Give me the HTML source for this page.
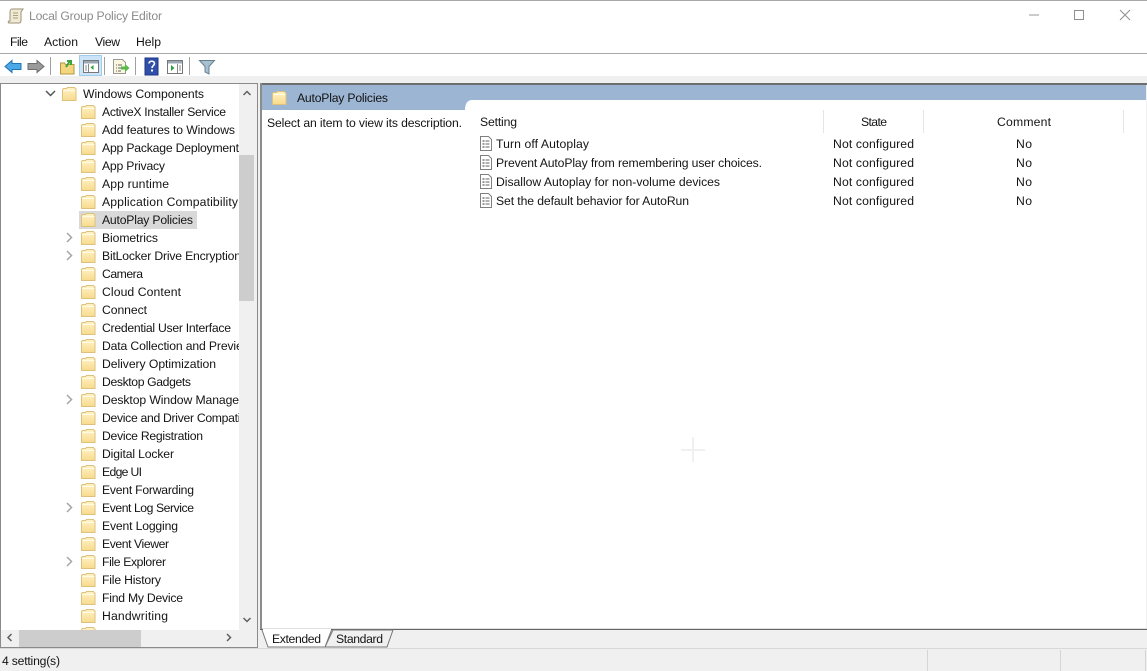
<!DOCTYPE html>
<html lang="en"><head><meta charset="utf-8"><title>Local Group Policy Editor</title>
<style>html,body{margin:0;padding:0;background:#fff;overflow:hidden}svg{display:block}text{font-family:"Liberation Sans",sans-serif;font-size:12.2px;fill:#141414}</style></head><body>
<svg xmlns="http://www.w3.org/2000/svg" width="1147" height="671" viewBox="0 0 1147 671">
<defs>
<linearGradient id="fg" x1="0" y1="0" x2="0" y2="1"><stop offset="0" stop-color="#fff4c9"/><stop offset="1" stop-color="#f8da8c"/></linearGradient>
<g id="f"><path d="M.5 3V2.500l1-1h3l1-1h7l1 1.500h.5V13.500H.5z" fill="url(#fg)" stroke="#dcc27c"/><path d="M1.500 3.500h12" stroke="#fffbe8"/></g>
<g id="c"><path d="M0 0l4.500 4.500L0 9" fill="none" stroke="#a6a6a6" stroke-width="1.500"/></g>
<g id="p"><path d="M.5.5h8l3 3v11H.5z" fill="#fff" stroke="#7f7f7f"/><path d="M2.500 5h2M2.500 8h2M2.500 11h2" stroke="#333"/><path d="M5.500 5h4M5.500 8h4M5.500 11h4" stroke="#666"/></g>
<clipPath id="t"><rect x="1" y="84" width="238" height="546"/></clipPath>
</defs>
<rect width="1147" height="671" fill="#fff"/>
<rect width="1147" height="1" fill="#a8a8a8"/>
<!-- title -->
<path d="M12 9h11l-2 3v9c0 1-1 2-2 2H9c-1 0-1-2 0-2h1V12c0-2 1-3 2-3z" fill="#f1ead2" stroke="#9a9278"/><path d="M13 13h5M13 15.500h5M13 18h5" stroke="#a8a08a"/>
<text x="29" y="20" textLength="133" style="fill:#8b8b8b">Local Group Policy Editor</text>
<path d="M1029 15h10" stroke="#9a9a9a"/><rect x="1074.500" y="10.500" width="9" height="9" fill="none" stroke="#8f8f8f"/><path d="M1120 10l10 10M1130 10l-10 10" stroke="#8f8f8f"/>
<!-- menu -->
<text x="10" y="46" textLength="18">File</text><text x="44" y="46" textLength="34">Action</text><text x="95" y="46" textLength="25">View</text><text x="136" y="46" textLength="25">Help</text>
<rect y="53" width="1147" height="1" fill="#a9a9a9"/>
<!-- toolbar -->
<rect y="76" width="1147" height="8" fill="#f0f0f0"/>
<path d="M5 66.500l7-6v3h9v6h-9v3z" fill="#4da8e6" stroke="#1f75b8"/>
<path d="M44 66.500l-7-6v3h-9v6h9v3z" fill="#9a9a9a" stroke="#6e6e6e"/>
<rect x="50" y="57" width="1" height="18" fill="#a0a0a0"/>
<path d="M60.500 63h4l1 1.500h8.500v9.500h-13.500z" fill="#f4d681" stroke="#b8963f"/><path d="M66 67l4-6m-3 0h4v4" fill="none" stroke="#3da53d" stroke-width="2"/>
<rect x="79.500" y="55.500" width="22" height="20" fill="#cce4f7" stroke="#9fcdec"/>
<rect x="83.500" y="60.500" width="15" height="12" fill="#fff" stroke="#777"/><rect x="84" y="61" width="14" height="2.500" fill="#9aa7b5"/><path d="M88.500 64v8" stroke="#888"/><path d="M85 66h2M85 68h2M85 70h2" stroke="#888"/><path d="M93.500 65v5l-3-2.500z" fill="#2e9e3c"/>
<rect x="104" y="57" width="1" height="18" fill="#a0a0a0"/>
<path d="M113.500 59.500h9l3 3v11h-12z" fill="#fbf7de" stroke="#999"/><path d="M116 65h1M116 68h1M116 71h1M118 65h4M118 68h3M118 71h3" stroke="#666"/><path d="M121 66.500h4v-2.500l4.500 4-4.500 4v-2.500h-4z" fill="#58b848"/>
<rect x="135" y="57" width="1" height="18" fill="#a0a0a0"/>
<rect x="145" y="58" width="13" height="17" fill="#2f4fa8" stroke="#1d3683"/>
<path d="M149 63.500c0-3 5.500-3 5.500 0 0 2-2.500 2-2.500 4.500" fill="none" stroke="#fff" stroke-width="1.600"/><rect x="151" y="69.500" width="2" height="2" fill="#fff"/>
<rect x="167.500" y="60.500" width="15" height="13" fill="#fff" stroke="#777"/><rect x="168" y="61" width="14" height="2.500" fill="#9aa7b5"/><path d="M177.500 64v9" stroke="#888"/><path d="M179 66h2M179 68h2M179 70h2" stroke="#888"/><path d="M171 65v6l3.500-3z" fill="#2e9e3c"/>
<rect x="189" y="57" width="1" height="18" fill="#a0a0a0"/>
<path d="M199.500 60.500h15l-5.500 6v7.500l-4-2v-5.500z" fill="#a8c0cf" stroke="#66808f"/>
<!-- left pane -->
<rect x="0" y="83" width="258" height="565" fill="#f0f0f0"/>
<rect x="0.500" y="83.500" width="257" height="564" fill="none" stroke="#8a8a8a"/>
<rect x="1" y="84" width="238" height="546" fill="#fff"/>
<rect x="239" y="84" width="16" height="546" fill="#f0f0f0"/>
<rect x="239" y="155" width="15" height="146" fill="#cdcdcd"/>
<path d="M243.500 96l3.500-3.500 3.500 3.500" transform="translate(0,-1)" fill="none" stroke="#606060" stroke-width="1.500"/>
<path d="M243.500 618l3.500 3.500 3.500-3.500" fill="none" stroke="#606060" stroke-width="1.500"/>
<rect x="19" y="630" width="122" height="17" fill="#cdcdcd"/>
<path d="M11.500 634l-3.500 3.500 3.500 3.500" fill="none" stroke="#606060" stroke-width="1.500"/>
<path d="M227 634l3.500 3.500-3.500 3.500" fill="none" stroke="#606060" stroke-width="1.500"/>
<g clip-path="url(#t)">
<rect x="79" y="211" width="118" height="18" fill="#d9d9d9"/>
<path d="M46 91l4.500 4.500L55 91" fill="none" stroke="#555" stroke-width="1.500"/>
<use href="#f" x="62" y="87"/>
<text x="83" y="98" textLength="121">Windows Components</text>
<use href="#f" x="81" y="105"/><text x="102" y="116" textLength="124">ActiveX Installer Service</text>
<use href="#f" x="81" y="123"/><text x="102" y="134" textLength="133">Add features to Windows</text>
<use href="#f" x="81" y="141"/><text x="102" y="152" textLength="137">App Package Deployment</text>
<use href="#f" x="81" y="159"/><text x="102" y="170" textLength="63">App Privacy</text>
<use href="#f" x="81" y="177"/><text x="102" y="188" textLength="67">App runtime</text>
<use href="#f" x="81" y="195"/><text x="102" y="206" textLength="136">Application Compatibility</text>
<use href="#f" x="81" y="213"/><text x="102" y="224" textLength="91">AutoPlay Policies</text>
<use href="#c" x="67" y="233"/><use href="#f" x="81" y="231"/><text x="102" y="242" textLength="56">Biometrics</text>
<use href="#c" x="67" y="251"/><use href="#f" x="81" y="249"/><text x="102" y="260" textLength="139">BitLocker Drive Encryption</text>
<use href="#f" x="81" y="267"/><text x="102" y="278" textLength="41">Camera</text>
<use href="#f" x="81" y="285"/><text x="102" y="296" textLength="79">Cloud Content</text>
<use href="#f" x="81" y="303"/><text x="102" y="314" textLength="45">Connect</text>
<use href="#f" x="81" y="321"/><text x="102" y="332" textLength="129">Credential User Interface</text>
<use href="#f" x="81" y="339"/><text x="102" y="350" textLength="185">Data Collection and Preview Builds</text>
<use href="#f" x="81" y="357"/><text x="102" y="368" textLength="114">Delivery Optimization</text>
<use href="#f" x="81" y="375"/><text x="102" y="386" textLength="89">Desktop Gadgets</text>
<use href="#c" x="67" y="395"/><use href="#f" x="81" y="393"/><text x="102" y="404" textLength="141">Desktop Window Manager</text>
<use href="#f" x="81" y="411"/><text x="102" y="422" textLength="161">Device and Driver Compatibility</text>
<use href="#f" x="81" y="429"/><text x="102" y="440" textLength="101">Device Registration</text>
<use href="#f" x="81" y="447"/><text x="102" y="458" textLength="72">Digital Locker</text>
<use href="#f" x="81" y="465"/><text x="102" y="476" textLength="40">Edge UI</text>
<use href="#f" x="81" y="483"/><text x="102" y="494" textLength="92">Event Forwarding</text>
<use href="#c" x="67" y="503"/><use href="#f" x="81" y="501"/><text x="102" y="512" textLength="92">Event Log Service</text>
<use href="#f" x="81" y="519"/><text x="102" y="530" textLength="76">Event Logging</text>
<use href="#f" x="81" y="537"/><text x="102" y="548" textLength="67">Event Viewer</text>
<use href="#c" x="67" y="557"/><use href="#f" x="81" y="555"/><text x="102" y="566" textLength="64">File Explorer</text>
<use href="#f" x="81" y="573"/><text x="102" y="584" textLength="59">File History</text>
<use href="#f" x="81" y="591"/><text x="102" y="602" textLength="81">Find My Device</text>
<use href="#f" x="81" y="609"/><text x="102" y="620" textLength="66">Handwriting</text>
<use href="#f" x="81" y="627"/>
</g>
<!-- right pane -->
<rect x="258" y="84" width="889" height="564" fill="#f0f0f0"/>
<rect x="260" y="83" width="887" height="2" fill="#6e6e6e"/>
<rect x="260" y="83" width="2" height="546" fill="#8c8c8c"/>
<rect x="262" y="85" width="884" height="543" fill="#fff"/>
<path d="M262 85h884v15H472c-4 0-7 3-7 10H262z" fill="#9bb5d3"/>
<use href="#f" x="272" y="91"/>
<text x="297" y="102" textLength="91">AutoPlay Policies</text>
<text x="267" y="127" textLength="195">Select an item to view its description.</text>
<text x="480" y="126" textLength="37">Setting</text><text x="861" y="126" textLength="26">State</text><text x="997" y="126" textLength="54">Comment</text>
<path d="M823.500 110v23M923.500 110v23M1123.500 110v23" stroke="#e5e5e5"/>
<use href="#p" x="480" y="136"/><text x="496" y="148" textLength="93">Turn off Autoplay</text><text x="833" y="148" textLength="81">Not configured</text><text x="1016" y="148" textLength="16">No</text>
<use href="#p" x="480" y="155"/><text x="496" y="167" textLength="266">Prevent AutoPlay from remembering user choices.</text><text x="833" y="167" textLength="81">Not configured</text><text x="1016" y="167" textLength="16">No</text>
<use href="#p" x="480" y="174"/><text x="496" y="186" textLength="224">Disallow Autoplay for non-volume devices</text><text x="833" y="186" textLength="81">Not configured</text><text x="1016" y="186" textLength="16">No</text>
<use href="#p" x="480" y="193"/><text x="496" y="205" textLength="193">Set the default behavior for AutoRun</text><text x="833" y="205" textLength="81">Not configured</text><text x="1016" y="205" textLength="16">No</text>
<path d="M693 437v25M681 450h24" stroke="#f0f0f0" stroke-width="2"/>
<!-- tabs -->
<rect x="262" y="628" width="885" height="1" fill="#e0e0e0"/>
<rect x="260" y="629" width="887" height="1" fill="#666"/>
<path d="M333 630l-8 17h62l6-17z" fill="#f0f0f0" stroke="#777"/>
<path d="M262 630l6 17h57l6.500-17" fill="#fff" stroke="#777"/>
<rect x="263" y="629" width="68" height="1" fill="#fff"/>
<text x="272" y="643" textLength="49">Extended</text><text x="336" y="643" textLength="47">Standard</text>
<!-- status -->
<rect y="648" width="1147" height="23" fill="#f0f0f0"/>
<rect y="648" width="1147" height="1" fill="#d8d8d8"/>
<path d="M927.500 650v21M1060.500 650v21M1145.500 650v21" stroke="#d5d5d5"/>
<text x="2" y="665" textLength="58">4 setting(s)</text>
</svg>
</body></html>
